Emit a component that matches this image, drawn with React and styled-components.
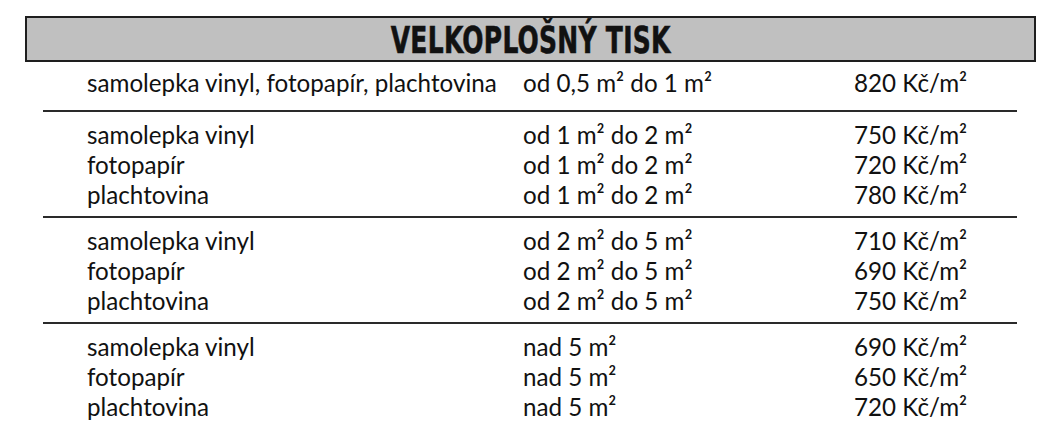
import React from "react";
import styled, { createGlobalStyle } from "styled-components";

const Global = createGlobalStyle`
  html, body { margin: 0; padding: 0; background: #fff; }
  body { font-family: "Lato", "Liberation Sans", sans-serif; color: #111; }
`;

const Page = styled.div`
  width: 1062px;
  height: 428px;
  padding: 16px 26px 0 25px;
  box-sizing: border-box;
  overflow: hidden;
`;

const Header = styled.div`
  height: 46px;
  box-sizing: border-box;
  background: #c0c0c0;
  border: 2px solid #1e1e1e;
  display: flex;
  align-items: center;
  justify-content: center;
`;

const Title = styled.h1`
  margin: 2px 0 0;
  font-family: "DejaVu Sans Condensed", "Liberation Sans Narrow", "Liberation Sans", sans-serif;
  font-weight: 700;
  font-size: 38px;
  line-height: 1;
  letter-spacing: 0.4px;
  color: #111;
  transform: scaleX(0.73);
  white-space: nowrap;
  -webkit-text-stroke: 0.6px #111;
`;

const Table = styled.div`
  margin: 0 19px 0 18px;
  display: flex;
  flex-direction: column;
`;

const Group = styled.div`
  padding: ${(p) => (p.$first ? "6px 0 12px" : "8px 0 6px")};
  border-bottom: ${(p) => (p.$last ? "none" : "2px solid #2a2a2a")};
`;

const Row = styled.div`
  display: grid;
  grid-template-columns: 436px 331px 1fr;
  padding-left: 44px;
  font-size: 24.2px;
  font-weight: 400;
  line-height: 30px;
  white-space: nowrap;
`;

const Cell = styled.span``;

const groups = [
  [["samolepka vinyl, fotopapír, plachtovina", "od 0,5 m² do 1 m²", "820 Kč/m²"]],
  [
    ["samolepka vinyl", "od 1 m² do 2 m²", "750 Kč/m²"],
    ["fotopapír", "od 1 m² do 2 m²", "720 Kč/m²"],
    ["plachtovina", "od 1 m² do 2 m²", "780 Kč/m²"],
  ],
  [
    ["samolepka vinyl", "od 2 m² do 5 m²", "710 Kč/m²"],
    ["fotopapír", "od 2 m² do 5 m²", "690 Kč/m²"],
    ["plachtovina", "od 2 m² do 5 m²", "750 Kč/m²"],
  ],
  [
    ["samolepka vinyl", "nad 5 m²", "690 Kč/m²"],
    ["fotopapír", "nad 5 m²", "650 Kč/m²"],
    ["plachtovina", "nad 5 m²", "720 Kč/m²"],
  ],
];

export default function App() {
  return (
    <Page>
      <Global />
      <Header>
        <Title>VELKOPLOŠNÝ TISK</Title>
      </Header>
      <Table>
        {groups.map((rows, gi) => (
          <Group key={gi} $first={gi === 0} $last={gi === groups.length - 1}>
            {rows.map((r, ri) => (
              <Row key={ri}>
                <Cell>{r[0]}</Cell>
                <Cell>{r[1]}</Cell>
                <Cell>{r[2]}</Cell>
              </Row>
            ))}
          </Group>
        ))}
      </Table>
    </Page>
  );
}
